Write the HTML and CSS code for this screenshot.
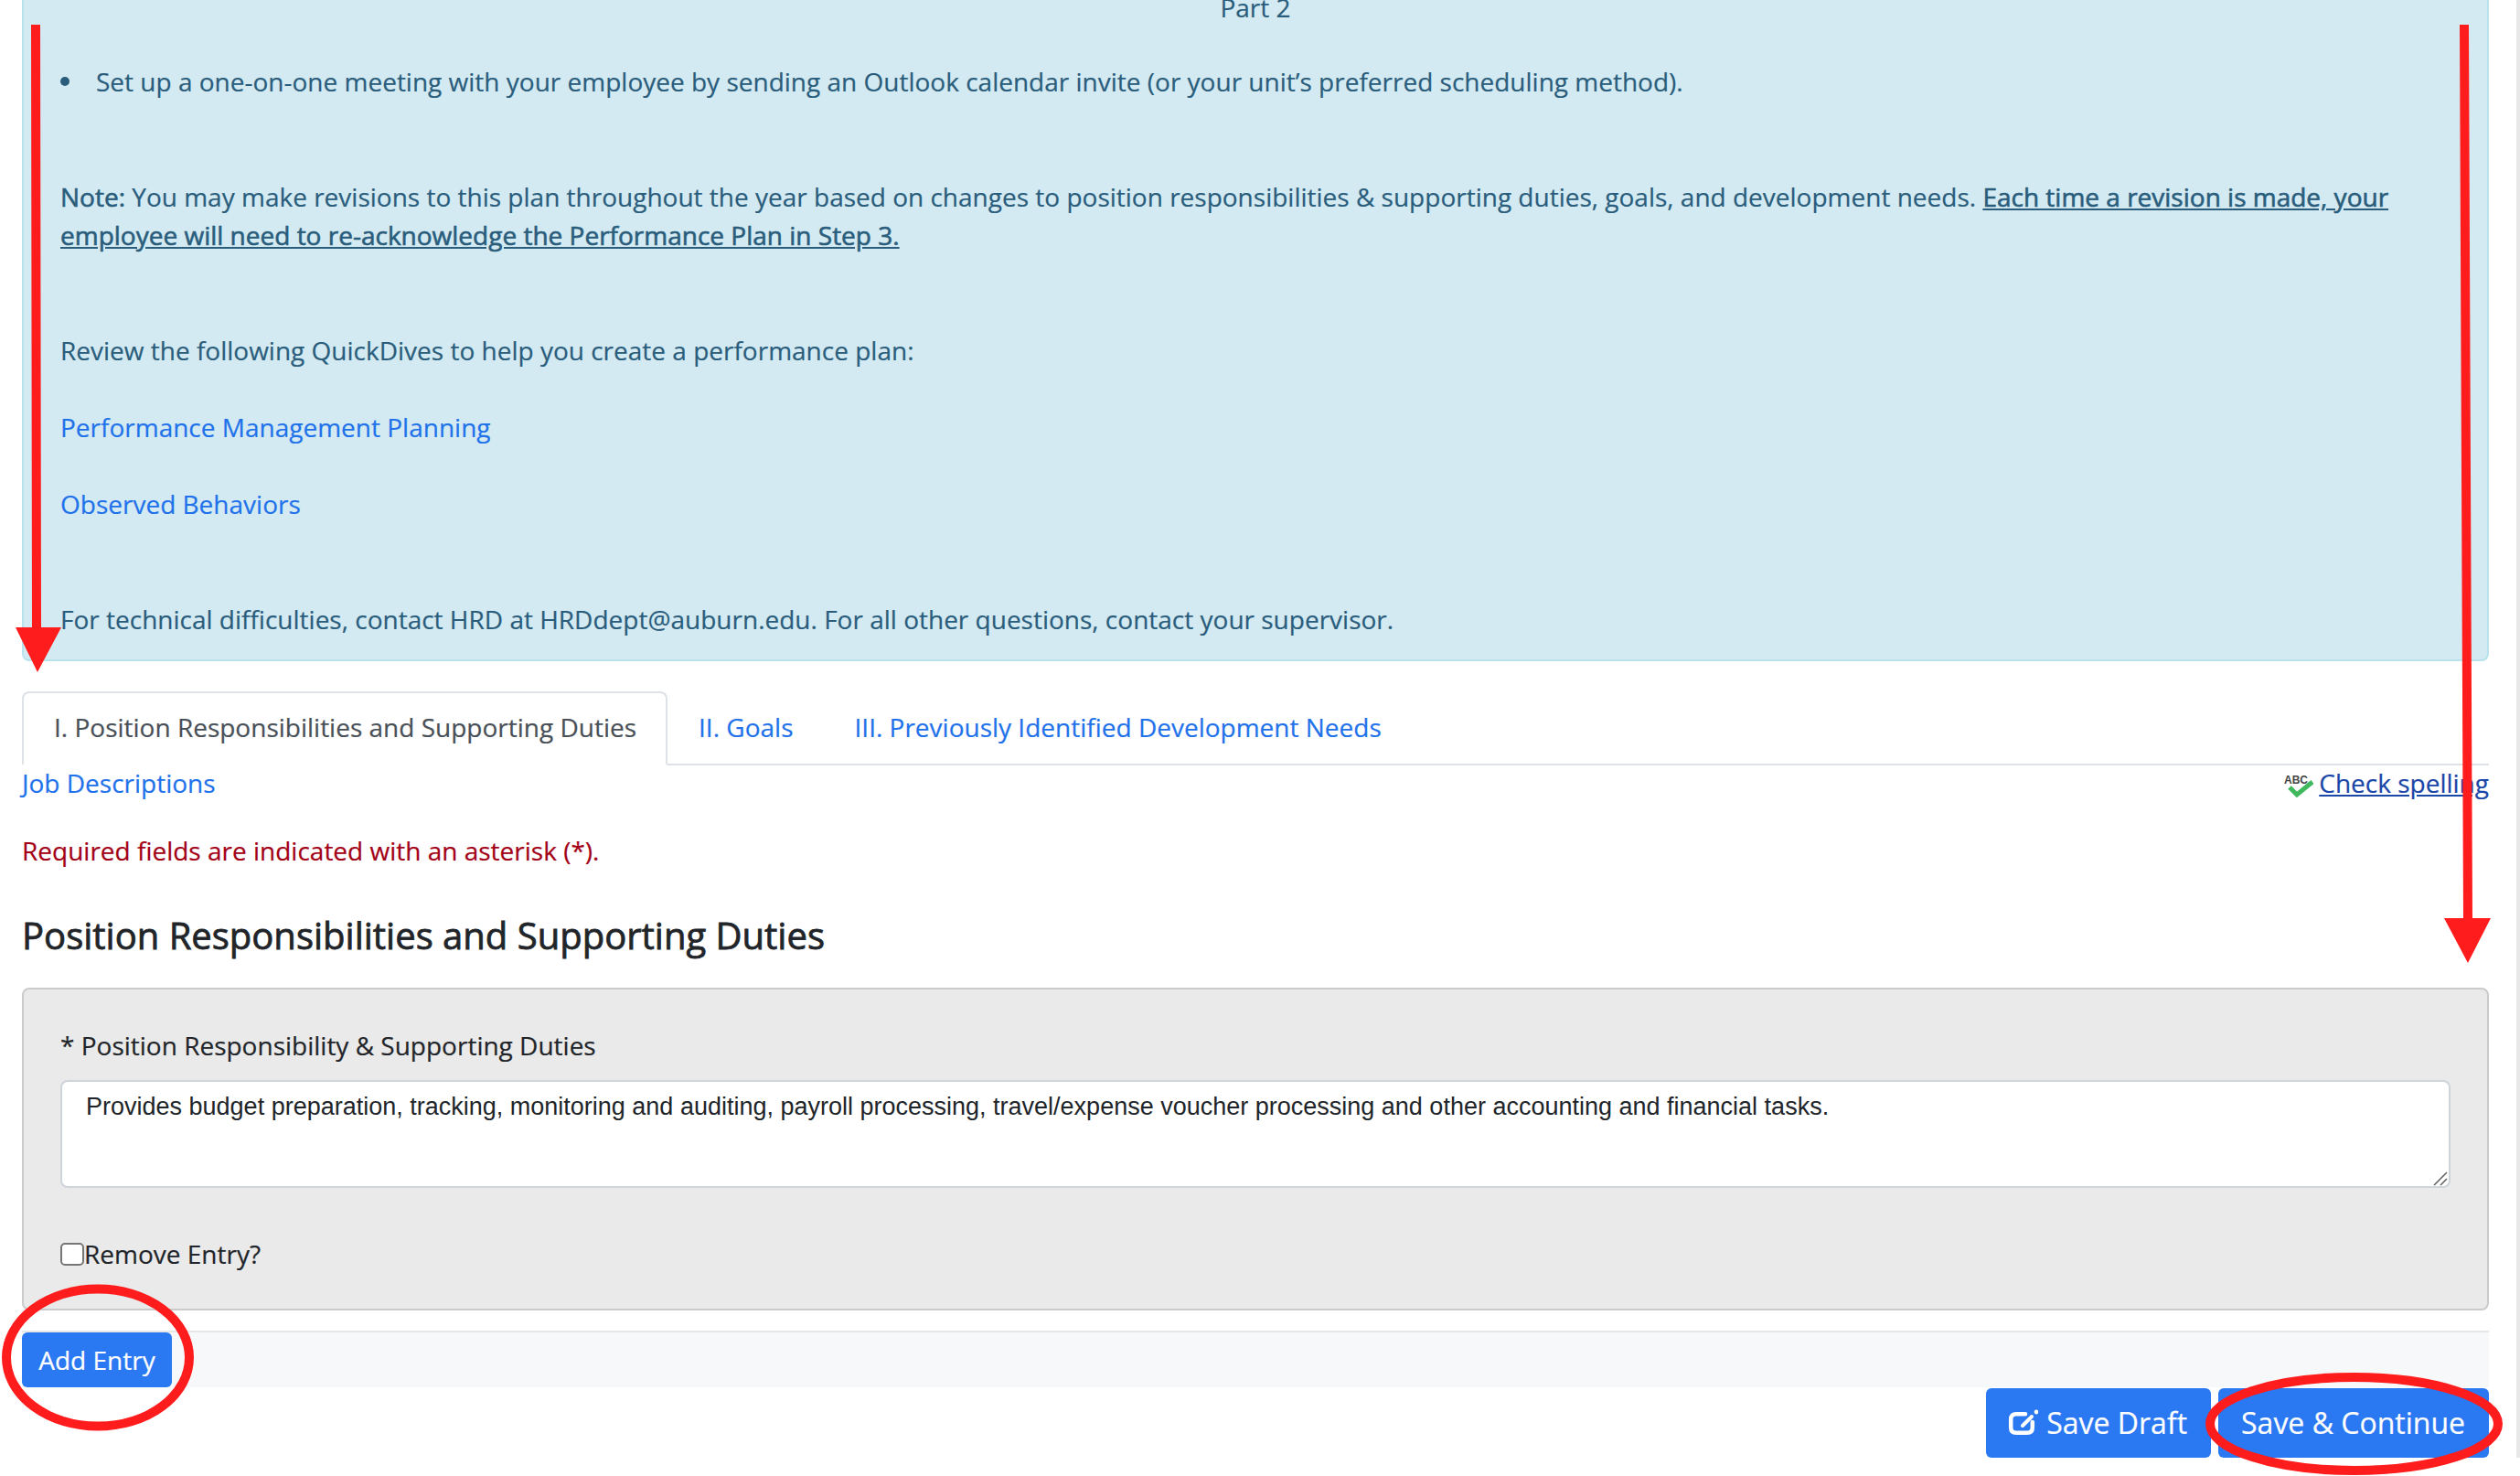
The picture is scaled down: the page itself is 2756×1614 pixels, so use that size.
FILE: index.html
```html
<!DOCTYPE html>
<html lang="en">
<head>
<meta charset="utf-8">
<title>Performance Plan</title>
<link rel="stylesheet" href="styles.css">
</head>
<body>
<div class="page">
  <div class="alert">
    <p class="part">Part 2</p>
    <ul class="steps"><li>Set up a one-on-one meeting with your employee by sending an Outlook calendar invite (or your unit’s preferred scheduling method).</li></ul>
    <p class="note"><strong class="semi">Note:</strong> You may make revisions to this plan throughout the year based on changes to position responsibilities &amp; supporting duties, goals, and development needs. <u class="semi">Each time a revision is made, your employee will need to re-acknowledge the Performance Plan in Step 3.</u></p>
    <p class="review">Review the following QuickDives to help you create a performance plan:</p>
    <p class="quick"><a href="#">Performance Management Planning</a></p>
    <p class="quick second"><a href="#">Observed Behaviors</a></p>
    <p class="contact">For technical difficulties, contact HRD at HRDdept@auburn.edu. For all other questions, contact your supervisor.</p>
  </div>

  <nav class="tabs">
    <a class="tab active" href="#">I. Position Responsibilities and Supporting Duties</a>
    <a class="tab" href="#">II. Goals</a>
    <a class="tab" href="#">III. Previously Identified Development Needs</a>
  </nav>

  <div class="toolbar">
    <a href="#">Job Descriptions</a>
    <span class="spell">
      <svg class="spell-icon" viewBox="0 0 32 26" aria-hidden="true">
        <text x="0" y="9.500" class="abc">ABC</text>
        <path d="M6 14 L14 22 L31 8" fill="none" stroke="#3fb95c" stroke-width="5"/>
      </svg>
      <a class="spell-link" href="#">Check spelling</a>
    </span>
  </div>

  <p class="required">Required fields are indicated with an asterisk (*).</p>
  <h2 class="title">Position Responsibilities and Supporting Duties</h2>

  <section class="panel">
    <label class="field-label" for="duty">* Position Responsibility &amp; Supporting Duties</label>
    <div class="duty-wrap">
      <textarea class="duty" id="duty">Provides budget preparation, tracking, monitoring and auditing, payroll processing, travel/expense voucher processing and other accounting and financial tasks.</textarea>
      <svg class="grip" viewBox="0 0 16 16" aria-hidden="true">
        <path d="M1 15 L15 1 M8 15 L15 8" fill="none" stroke="#666" stroke-width="1.600"/>
      </svg>
    </div>
    <label class="remove"><input class="check" type="checkbox">Remove Entry?</label>
  </section>

  <div class="card-footer"><button class="btn small" type="button">Add Entry</button></div>

  <div class="actions">
    <button class="btn large" type="button">
      <svg class="edit-icon" viewBox="0 0 34 32" aria-hidden="true">
        <path d="M20 6.200 H10 Q4.200 6.200 4.200 12 V21 Q4.200 26.800 10 26.800 H22 Q27.800 26.800 27.800 21 V15" fill="none" stroke="#fff" stroke-width="4.500" stroke-linecap="round"/>
        <path d="M17 19 L27 9" fill="none" stroke="#fff" stroke-width="4" stroke-linecap="round"/>
        <circle cx="32" cy="4" r="2.400" fill="#fff"/>
      </svg>Save Draft</button>
    <button class="btn large" type="button">Save &amp; Continue</button>
  </div>
</div>

<svg class="marks" viewBox="0 0 2756 1614" aria-hidden="true">
  <path d="M34 27 H44 L45 686 H67 L41 735 L17 686 H35 Z" fill="#fe1c1c"/>
  <path d="M2690 27 H2700 L2704 1004 H2724 L2699 1053 L2673 1004 H2694 Z" fill="#fe1c1c"/>
  <ellipse cx="107" cy="1484.500" rx="100" ry="75" fill="none" stroke="#fe1c1c" stroke-width="10"/>
  <ellipse cx="2574.500" cy="1557" rx="157.500" ry="51" fill="none" stroke="#fe1c1c" stroke-width="10"/>
</svg>
</body>
</html>
```

FILE: styles.css
```css
* { box-sizing: border-box; }
html, body { margin: 0; padding: 0; background: #fff; }
body {
  width: 2756px;
  height: 1614px;
  overflow: hidden;
  position: relative;
  font-family: "Open Sans", sans-serif;
  font-size: 28px;
  line-height: 42px;
  color: #212529;
  -webkit-text-stroke: 0.2px currentColor;
}
a { color: #1f72ea; text-decoration: none; }
p { margin: 0; }

.page {
  width: 2756px;
  padding: 0 30px 0 24px;
  border-right: 4px solid #e8e8e8;
}

.alert {
  height: 723px;
  padding: 0 40px;
  background: #d3eaf2;
  border: 2px solid #b9e3ec;
  border-top: 0;
  border-radius: 0 0 8px 8px;
  color: #2a5d7c;
  overflow: hidden;
}
.part { margin-top: -13px; text-align: center; }
.steps { margin: 39px 0 0; padding: 0; list-style: none; }
.steps li { display: flex; align-items: center; }
.steps li::before {
  content: "";
  flex: none;
  width: 10px;
  height: 10px;
  margin-right: 29px;
  border-radius: 50%;
  background: #2a5d7c;
}
.note { margin-top: 84px; }
.semi { font-weight: 400; -webkit-text-stroke: 0.6px currentColor; }
.review { margin-top: 84px; }
.quick { margin-top: 42px; }
.quick.second { margin-top: 42px; }
.contact { margin-top: 84px; }

.tabs {
  display: flex;
  height: 81px;
  margin-top: 33px;
  border-bottom: 2px solid #dee2e6;
}
.tab {
  height: 81px;
  padding: 18px 33px 0 34px;
}
.tab.active {
  color: #495057;
  background: #fff;
  border: 2px solid #dee2e6;
  border-bottom-color: #fff;
  border-radius: 8px 8px 0 0;
  padding: 16px 32px 0 33px;
}

.toolbar {
  display: flex;
  justify-content: space-between;
  align-items: center;
  height: 42px;
  margin-top: -2px;
}
.spell { display: flex; align-items: center; gap: 6px; }
.spell-icon { width: 32px; height: 26px; margin-top: 8px; }
.abc { font: 700 12px "Liberation Sans", sans-serif; fill: #444; -webkit-text-stroke: 0; }
.spell-link { color: #1a47a8; text-decoration: underline; }

.required { margin-top: 32px; color: #a30016; }
.title {
  margin: 48px 0 0;
  font-size: 40px;
  line-height: 48px;
  font-weight: 400;
  color: #212529;
  -webkit-text-stroke: 0.8px currentColor;
}

.panel {
  height: 353px;
  margin-top: 33px;
  padding: 40px 40px 0;
  background: #eaeaea;
  border: 2px solid #cbcbcb;
  border-radius: 8px;
}
.field-label { display: block; height: 59px; }
.duty-wrap { position: relative; height: 118px; }
.duty {
  display: block;
  width: 100%;
  height: 118px;
  padding: 12px 26px;
  border: 2px solid #ced4da;
  border-radius: 8px;
  background: #fff;
  color: #212529;
  font-family: "Liberation Sans", sans-serif;
  font-size: 27px;
  line-height: 30px;
  resize: none;
  -webkit-text-stroke: 0;
}
.grip {
  position: absolute;
  right: 3px;
  bottom: 2px;
  width: 16px;
  height: 16px;
}
.remove { display: flex; align-items: center; margin-top: 51px; }
.check {
  appearance: none;
  flex: none;
  width: 26px;
  height: 25px;
  margin: 0;
  background: #fff;
  border: 2px solid #767676;
  border-radius: 5px;
}

.card-footer {
  height: 62px;
  margin-top: 22px;
  background: #f7f8fa;
  border-top: 2px solid #e7e7e8;
}
.btn {
  border: 0;
  border-radius: 6px;
  background: #2a78f2;
  color: #fff;
  font-family: "Open Sans", sans-serif;
}
.btn.small { display: block; height: 60px; width: 164px; padding: 0; font-size: 28px; line-height: 42px; }
.actions {
  display: flex;
  justify-content: flex-end;
  gap: 8px;
  margin-top: 1px;
}
.btn.large { display: flex; align-items: center; justify-content: center; height: 76px; padding: 0 26px 0 25px; font-size: 32px; line-height: 48px; }
.edit-icon { width: 34px; height: 32px; margin: 0 9px 0 -2px; }

.marks {
  position: absolute;
  left: 0;
  top: 0;
  width: 2756px;
  height: 1614px;
  pointer-events: none;
}
```
